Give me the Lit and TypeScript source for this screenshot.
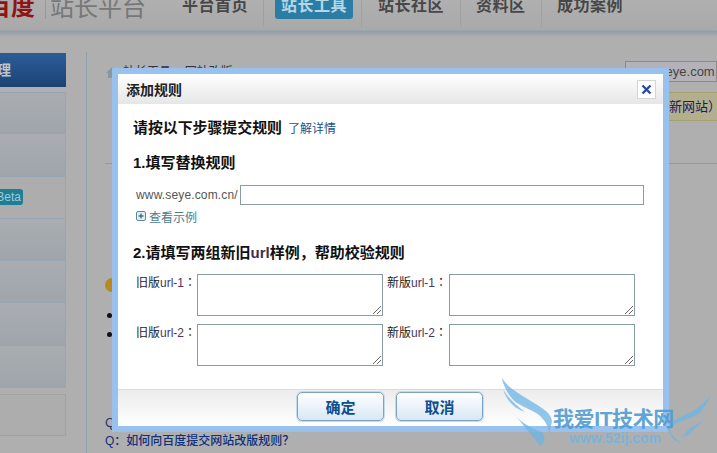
import { LitElement, html, css } from "lit";
import { customElement } from "lit/decorators.js";

@customElement("app-root")
export class AppRoot extends LitElement {
  static styles = css`
    :host {
      display: block;
      width: 717px;
      height: 453px;
      overflow: hidden;
      position: relative;
      background: #afafaf;
      font-family: "Liberation Sans", "Noto Sans CJK SC", sans-serif;
      font-size: 12px;
      color: #1c1c1c;
    }
    * { box-sizing: border-box; }

    /* ---- dimmed page ---- */
    .top {
      height: 37px;
      display: flex;
      align-items: flex-start;
      background: linear-gradient(#b0b0b0 0, #a9a9a9 30px, #8f9dac 31px, #98a0a8 32px, #aeaeae 37px);
      overflow: hidden;
    }
    .logo {
      width: 45px;
      flex: none;
      display: flex;
      justify-content: flex-end;
      padding-right: 10px;
      margin-top: -5px;
      font-size: 24px;
      line-height: 24px;
      font-weight: 700;
      color: #8f1414;
      white-space: nowrap;
      overflow: hidden;
    }
    .logo span { flex: none; }
    .brand {
      margin-top: -6px;
      padding-left: 4px;
      border-left: 1px solid #999;
      height: 25px;
      font-size: 24px;
      line-height: 27px;
      color: #777;
      width: 137px;
      flex: none;
      white-space: nowrap;
    }
    .nav { display: flex; margin-top: -6px; height: 33px; }
    .nav a {
      font-size: 16px;
      line-height: 24px;
      font-weight: 700;
      color: #474747;
      letter-spacing: 0.5px;
      flex: none;
      white-space: nowrap;
    }
    .sep { width: 1px; flex: none; background: #a0a0a0; }
    .n1 { width: 81px; }
    .n2 {
      width: 78px;
      height: 25px;
      background: #2a7ea6;
      border-radius: 3px;
      color: #b6d6e4 !important;
      text-align: center;
    }
    .n3 { width: 82px; }
    .n4 { width: 65px; }
    .s-a { margin-right: 11px; }
    .s-b { margin-left: 8px; margin-right: 16px; }
    .s-c { margin-right: 15px; }

    .body { display: flex; height: 416px; }
    .side { width: 66px; flex: none; padding-top: 16px; margin-right: 20px; }
    .side-head {
      height: 34px;
      background: linear-gradient(#2c5c98, #1b4474);
      color: #c4c4c4;
      font-size: 14px;
      font-weight: 700;
      line-height: 34px;
      white-space: nowrap;
      display: flex;
      justify-content: flex-end;
      padding-right: 55px;
      margin-bottom: 5px;
      overflow: hidden;
    }
    .side-head span { flex: none; }
    .side-item {
      height: 42.3px;
      background: linear-gradient(#a9adb2, #9fa5ab);
      border: 1px solid #97a6b4;
      border-left: 0;
      border-top: 0;
      display: flex;
      align-items: center;
      justify-content: flex-start;
    }
    .side-item.first { border-top: 1px solid #97a6b4; }
    .side-item.plain { background: #adadad; }
    .beta-wrap { width: 23px; overflow: hidden; display: flex; justify-content: flex-end; }
    .beta {
      flex: none;
      background: #1f7d96;
      color: #9fcbd6;
      font-size: 12px;
      line-height: 16px;
      border-radius: 3px;
      padding: 0 2px 0 4px;
    }
    .side-box {
      height: 42px;
      margin-top: 6px;
      border: 1px solid #a2a2a2;
      border-left: 0;
      background: #adadad;
    }
    .main {
      flex: 1;
      margin-top: 15px;
      border-left: 1px solid #8fa0b0;
      padding-left: 18px;
      position: relative;
      min-width: 0;
    }
    .crumbs { display: flex; justify-content: space-between; padding-top: 13px; height: 52px; }
    .crumb { display: flex; gap: 4px; color: #333; line-height: 14px; white-space: nowrap; }
    .crumb svg { flex: none; }
    .site {
      width: 92px;
      height: 21px;
      border: 1px solid #8a8a8a;
      background: #b5b1b8;
      color: #444;
      font-size: 13px;
      line-height: 19px;
      padding-left: 2px;
      white-space: nowrap;
      overflow: hidden;
      flex: none;
      margin-top: -4px;
    }
    .notice-row { display: flex; justify-content: flex-end; height: 59px; }
    .notice {
      width: 92px;
      height: 29px;
      margin-top: -12px;
      background: #b3ae8e;
      border-top: 1px solid #a6a070;
      border-bottom: 1px solid #a6a070;
      color: #10206a;
      font-size: 13px;
      line-height: 27px;
      padding-left: 44px;
      white-space: nowrap;
      overflow: hidden;
    }
    .rule { height: 1px; background: #8d99a3; margin-bottom: 114px; }
    .tip { width: 14px; height: 14px; border-radius: 50%; background: #b58a1e; margin-bottom: 21px; }
    .dot { width: 5px; height: 5px; border-radius: 50%; background: #111; margin: 0 0 14px 2px; }
    .q1 { margin-top: 77px; color: #2a3a6a; font-size: 13px; line-height: 18px; }
    .q2 { color: #10307a; font-size: 12px; line-height: 18px; font-weight: 500; white-space: nowrap; }

    /* ---- dialog ---- */
    .dialog {
      position: absolute;
      left: 112px;
      top: 68px;
      width: 557px;
      height: 364px;
      border: 6px solid #99c1ee;
      background: #fff;
      display: flex;
      flex-direction: column;
    }
    .head {
      height: 30px;
      flex: none;
      background: linear-gradient(#ffffff, #e6e6e6);
      display: flex;
      align-items: center;
      justify-content: space-between;
      padding: 0 7px 0 8px;
    }
    .head h2 { margin: 0; font-size: 14px; font-weight: 700; color: #222; }
    .close {
      width: 19px;
      height: 19px;
      background: #fff;
      border: 1px solid #d4d4d4;
      display: flex;
      align-items: center;
      justify-content: center;
    }
    .content { flex: 1; padding: 15px 19px 0 15px; min-height: 0; }
    .intro { display: flex; align-items: baseline; gap: 6px; height: 18px; }
    .intro b { font-size: 14.9px; line-height: 18px; color: #111; }
    .intro a { font-size: 12px; color: #1a5488; }
    h3 {
      margin: 0;
      font-size: 15px;
      line-height: 18px;
      font-weight: 700;
      color: #111;
      white-space: nowrap;
    }
    h3 .u { color: #3a3050; }
    .s1 { margin-top: 17px; }
    .urlrow { display: flex; align-items: center; margin: 13px 0 0 3px; height: 20px; }
    .urlrow span { width: 104px; color: #555; font-size: 12px; flex: none; letter-spacing: 0.15px; white-space: nowrap; }
    .urlrow .input { width: 404px; height: 20px; border: 1px solid #8a9ba6; flex: none; }
    .example { display: flex; align-items: center; gap: 3px; margin: 3px 0 0 3px; height: 16px; color: #4c7a8c; font-size: 12px; }
    .s2 { margin-top: 20px; }
    .grid {
      display: grid;
      grid-template-columns: 61px 186px 4px 62px 186px;
      grid-template-rows: 42px 42px;
      row-gap: 8px;
      margin: 12px 0 0 3px;
    }
    .lbl { font-size: 12px; line-height: 16px; color: #222; white-space: nowrap; }
    .lbl i { font-style: normal; color: #4a3560; }
    .lbl u { text-decoration: none; font-family: "Noto Sans CJK TC", sans-serif; }
    .ta { border: 1px solid #8a9ba6; position: relative; background: #fff; }
    .ta svg { position: absolute; right: 0; bottom: 0; }
    .foot {
      height: 37px;
      flex: none;
      border-top: 1px solid #dcdcdc;
      background: linear-gradient(#ececec, #ffffff);
      display: flex;
      justify-content: center;
      gap: 12px;
      padding: 2px 1px 0 0;
    }
    .btn {
      width: 87px;
      height: 29px;
      border: 1px solid #7ba4c4;
      border-radius: 5px;
      box-shadow: 0 0 0 1px #c3dbf0;
      background: linear-gradient(#ffffff, #d9e7f4);
      color: #0d4f8e;
      font-size: 15px;
      font-weight: 700;
      display: flex;
      align-items: center;
      justify-content: center;
    }

    /* ---- watermark ---- */
    .mark { position: absolute; left: 495px; top: 372px; width: 222px; height: 81px; }
    .mark-text {
      position: absolute;
      left: 553px;
      top: 407px;
      color: #4f9cd2;
      font-size: 21px;
      line-height: 24px;
      font-weight: 700;
      white-space: nowrap;
      opacity: 0.9;
      letter-spacing: -0.4px;
    }
    .mark-url {
      position: absolute;
      left: 569px;
      top: 431px;
      color: #78b4de;
      font-size: 14px;
      line-height: 14px;
      font-weight: 700;
      white-space: nowrap;
      opacity: 0.9;
    }
  `;

  private resizer() {
    return html`<svg width="12" height="12" viewBox="0 0 12 12" fill="none" stroke="#666" stroke-width="1">
      <path d="M3 11 11 3M7 11l4-4" />
    </svg>`;
  }

  private field(label: string, url: string) {
    return html`<div class="lbl">${label}<i>${url}</i><u>：</u></div>
      <div class="ta">${this.resizer()}</div>`;
  }

  render() {
    return html`
      <div class="top">
        <div class="logo"><span>百度</span></div>
        <div class="brand">站长平台</div>
        <nav class="nav">
          <a class="n1">平台首页</a><i class="sep s-a"></i>
          <a class="n2">站长工具</a><i class="sep s-b"></i>
          <a class="n3">站长社区</a><i class="sep s-c"></i>
          <a class="n4">资料区</a><i class="sep s-c"></i>
          <a>成功案例</a>
        </nav>
      </div>
      <div class="body">
        <aside class="side">
          <div class="side-head"><span>站点管理</span></div>
          <div class="side-item first"></div>
          <div class="side-item"></div>
          <div class="side-item plain"><div class="beta-wrap"><span class="beta">Beta</span></div></div>
          <div class="side-item"></div>
          <div class="side-item"></div>
          <div class="side-item"></div>
          <div class="side-item"></div>
          <div class="side-box"></div>
        </aside>
        <section class="main">
          <div class="crumbs">
            <div class="crumb">
              <svg width="14" height="14" viewBox="0 0 14 14"><path d="M7 2 1 8h2v5h8V8h2z" fill="#8a96a0" /></svg>
              <span>站长工具 &gt; 网站改版</span>
            </div>
            <div class="site">www.seye.com.cn</div>
          </div>
          <div class="notice-row"><div class="notice">新网站）</div></div>
          <div class="rule"></div>
          <div class="tip"></div>
          <div class="dot"></div>
          <div class="dot"></div>
          <div class="q1">Q：</div>
          <div class="q2">Q：如何向百度提交网站改版规则？</div>
        </section>
      </div>

      <div class="dialog" role="dialog">
        <div class="head">
          <h2>添加规则</h2>
          <div class="close">
            <svg width="11" height="11" viewBox="0 0 11 11"><path d="M1.5 1.5 9.5 9.5M9.5 1.5 1.5 9.5" stroke="#2a4aa0" stroke-width="2.4" /></svg>
          </div>
        </div>
        <div class="content">
          <div class="intro"><b>请按以下步骤提交规则</b><a>了解详情</a></div>
          <h3 class="s1">1.填写替换规则</h3>
          <div class="urlrow"><span>www.seye.com.cn/</span><div class="input"></div></div>
          <div class="example">
            <svg width="10" height="10" viewBox="0 0 10 10"><rect x=".5" y=".5" width="9" height="9" rx="1.5" fill="#e6eef2" stroke="#5b8a9c" /><path d="M2.5 5h5M5 2.5v5" stroke="#3f7386" stroke-width="1.4" /></svg>
            <span>查看示例</span>
          </div>
          <h3 class="s2">2.请填写两组新旧<span class="u">url</span>样例，帮助校验规则</h3>
          <div class="grid">
            ${this.field("旧版", "url-1")}<span></span>${this.field("新版", "url-1")}
            ${this.field("旧版", "url-2")}<span></span>${this.field("新版", "url-2")}
          </div>
        </div>
        <div class="foot">
          <div class="btn">确定</div>
          <div class="btn">取消</div>
        </div>
      </div>

      <svg class="mark" viewBox="0 0 222 81" fill="#6db4e6" fill-opacity=".75">
        <path d="M6.7 5.3C12 16 28 24 45 34.7 53 40 58 45 56.7 51.3L54 61C53 52 48 46 41.7 41.3 32 36 22 32 18.3 28 12 21 8 13 6.7 5.3Z" />
        <path d="M8.3 18C14 27 22 34 30 39.7 22 38 12 30 8.3 18Z" />
        <path d="M18.3 39.7C24 50 36 56 47 60 51 66 50 70 45 74.7 42 67 32 60 18.3 39.7Z" />
        <path d="M215.7 23C212 32 208 37 205 41 198 46 188 48 181.7 51.3 176 55 173 58 173 61 172 56 176 50 183 46 193 42 206 36 215.7 23Z" />
        <path d="M208 48C202 55 196 60 193 63L187 65 191 60 195 56C200 54 204 51 208 48Z" />
        <path d="M173 56C176 62 180 67 186.7 71 180 70 174 64 173 56Z" />
      </svg>
      <div class="mark-text">我爱IT技术网</div>
      <div class="mark-url">www.52ij.com</div>
    `;
  }
}
